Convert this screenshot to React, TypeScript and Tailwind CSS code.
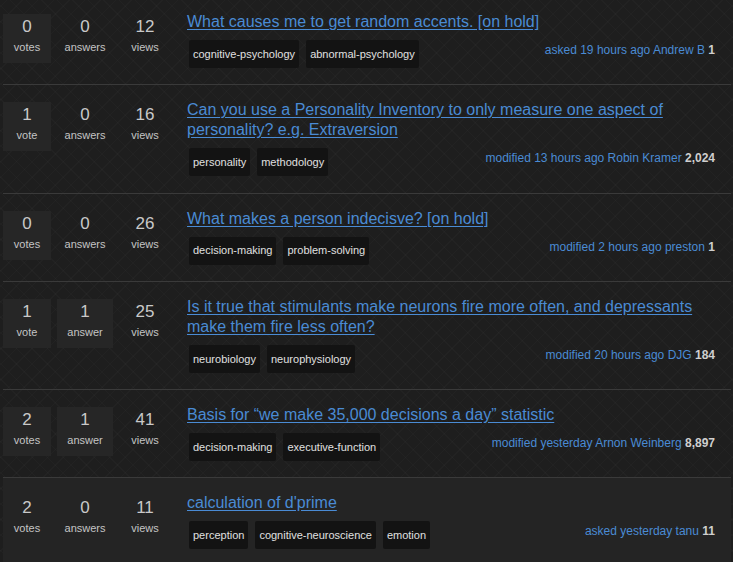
import React from "react";

type Question = {
  votes: number;
  answers: number;
  views: number;
  title: string;
  tags: string[];
  action: string;
  user: string;
  rep: string;
};

const questions: Question[] = [
  {
    votes: 0,
    answers: 0,
    views: 12,
    title: "What causes me to get random accents. [on hold]",
    tags: ["cognitive-psychology", "abnormal-psychology"],
    action: "asked 19 hours ago",
    user: "Andrew B",
    rep: "1",
  },
  {
    votes: 1,
    answers: 0,
    views: 16,
    title:
      "Can you use a Personality Inventory to only measure one aspect of personality? e.g. Extraversion",
    tags: ["personality", "methodology"],
    action: "modified 13 hours ago",
    user: "Robin Kramer",
    rep: "2,024",
  },
  {
    votes: 0,
    answers: 0,
    views: 26,
    title: "What makes a person indecisve? [on hold]",
    tags: ["decision-making", "problem-solving"],
    action: "modified 2 hours ago",
    user: "preston",
    rep: "1",
  },
  {
    votes: 1,
    answers: 1,
    views: 25,
    title:
      "Is it true that stimulants make neurons fire more often, and depressants make them fire less often?",
    tags: ["neurobiology", "neurophysiology"],
    action: "modified 20 hours ago",
    user: "DJG",
    rep: "184",
  },
  {
    votes: 2,
    answers: 1,
    views: 41,
    title: "Basis for \u201cwe make 35,000 decisions a day\u201d statistic",
    tags: ["decision-making", "executive-function"],
    action: "modified yesterday",
    user: "Arnon Weinberg",
    rep: "8,897",
  },
  {
    votes: 2,
    answers: 0,
    views: 11,
    title: "calculation of d'prime",
    tags: ["perception", "cognitive-neuroscience", "emotion"],
    action: "asked yesterday",
    user: "tanu",
    rep: "11",
  },
];

function Stat({
  value,
  label,
  boxed,
  className,
}: {
  value: number;
  label: string;
  boxed: boolean;
  className: string;
}) {
  return (
    <div
      className={
        "h-[49px] flex flex-col items-center pt-[3px] " +
        className +
        (boxed ? " bg-[#262626]" : "")
      }
    >
      <span className="text-[17px] leading-[20px] text-[#c9c9c9]">{value}</span>
      <span className="text-[11px] leading-[14px] mt-[3px] text-[#c4c4c4]">{label}</span>
    </div>
  );
}

export default function App() {
  return (
    <div
      className="min-h-screen w-full bg-[#1e1e1e] bg-[image:repeating-linear-gradient(45deg,rgba(255,255,255,0.018)_0px,rgba(255,255,255,0.018)_1px,transparent_1px,transparent_11px),repeating-linear-gradient(-45deg,rgba(255,255,255,0.018)_0px,rgba(255,255,255,0.018)_1px,transparent_1px,transparent_11px)] overflow-hidden"
      style={{ fontFamily: '"Liberation Sans", Arial, sans-serif' }}
    >
      <div className="pl-[3px] pr-[2px] -mt-[3px]">
        {questions.map((q, i) => {
          const last = i === questions.length - 1;
          return (
            <div
              key={i}
              className={
                "flex pt-[15px] pb-[16.25px] " +
                (last ? "bg-[#242424]" : "border-b border-[#3a3a3a]")
              }
            >
              <div className="flex shrink-0 pt-[2px]">
                <Stat
                  value={q.votes}
                  label={q.votes === 1 ? "vote" : "votes"}
                  boxed={!last}
                  className="w-[48px]"
                />
                <Stat
                  value={q.answers}
                  label={q.answers === 1 ? "answer" : "answers"}
                  boxed={q.answers > 0 && !last}
                  className="w-[56px] ml-[6px]"
                />
                <Stat value={q.views} label="views" boxed={false} className="w-[56px] ml-[4px]" />
              </div>
              <div className="ml-[14px] flex-1 min-w-0 pr-[16px]">
                <a
                  href="#"
                  className="block text-[16px] leading-[20px] text-[#4a8bd4] underline underline-offset-[2px] max-w-[530px]"
                >
                  {q.title}
                </a>
                <div className="flex justify-between items-start mt-[8px]">
                  <div className="flex gap-[7px] ml-[2px]">
                    {q.tags.map((t) => (
                      <span
                        key={t}
                        className="h-[28px] px-[4px] flex items-center text-[11px] text-[#e0e0e0] bg-[#131313] rounded-[2px]"
                      >
                        {t}
                      </span>
                    ))}
                  </div>
                  <div className="text-[12px] leading-[15px] mt-[3px] whitespace-nowrap">
                    <span className="text-[#4a8bd4]">
                      {q.action} {q.user}
                    </span>{" "}
                    <span className="font-bold text-[#cfcfcf]">{q.rep}</span>
                  </div>
                </div>
              </div>
            </div>
          );
        })}
      </div>
    </div>
  );
}
